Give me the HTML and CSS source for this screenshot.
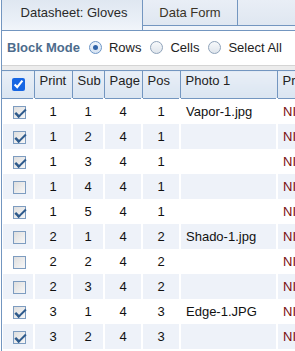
FILE: index.html
```html
<!DOCTYPE html>
<html lang="en">
<head>
    <meta charset="UTF-8">
    <meta name="viewport" content="width=device-width, initial-scale=1.0">
    <title>Datasheet: Gloves</title>
    <link rel="stylesheet" href="styles.css">
</head>
<body>
    <div class="sheet">
        <div class="tabs">
            <div class="tab active">Datasheet: Gloves</div>
            <div class="tab">Data Form</div>
            <div class="tab-fill"></div>
        </div>

        <div class="toolbar">
            <span class="label">Block Mode</span>
            <span class="radio on"></span><span class="opt">Rows</span>
            <span class="radio"></span><span class="opt">Cells</span>
            <span class="radio"></span><span class="opt">Select All</span>
        </div>

        <div class="grid-wrap">
            <table class="grid">
                <colgroup>
                    <col class="c-check">
                    <col class="c-print">
                    <col class="c-sub">
                    <col class="c-page">
                    <col class="c-pos">
                    <col class="c-photo">
                    <col class="c-next">
                </colgroup>
                <thead>
                    <tr>
                        <th class="center"><input type="checkbox" checked></th>
                        <th>Print</th>
                        <th>Sub</th>
                        <th>Page</th>
                        <th>Pos</th>
                        <th>Photo 1</th>
                        <th>Product</th>
                    </tr>
                </thead>
                <tbody>
                    <tr>
                        <td class="center"><span class="cb on"></span></td>
                        <td class="num">1</td><td class="num">1</td><td class="num">4</td><td class="num">1</td>
                        <td>Vapor-1.jpg</td><td class="brand">NIKE</td>
                    </tr>
                    <tr>
                        <td class="center"><span class="cb on"></span></td>
                        <td class="num">1</td><td class="num">2</td><td class="num">4</td><td class="num">1</td>
                        <td></td><td class="brand">NIKE</td>
                    </tr>
                    <tr>
                        <td class="center"><span class="cb on"></span></td>
                        <td class="num">1</td><td class="num">3</td><td class="num">4</td><td class="num">1</td>
                        <td></td><td class="brand">NIKE</td>
                    </tr>
                    <tr>
                        <td class="center"><span class="cb"></span></td>
                        <td class="num">1</td><td class="num">4</td><td class="num">4</td><td class="num">1</td>
                        <td></td><td class="brand">NIKE</td>
                    </tr>
                    <tr>
                        <td class="center"><span class="cb on"></span></td>
                        <td class="num">1</td><td class="num">5</td><td class="num">4</td><td class="num">1</td>
                        <td></td><td class="brand">NIKE</td>
                    </tr>
                    <tr>
                        <td class="center"><span class="cb"></span></td>
                        <td class="num">2</td><td class="num">1</td><td class="num">4</td><td class="num">2</td>
                        <td>Shado-1.jpg</td><td class="brand">NIKE</td>
                    </tr>
                    <tr>
                        <td class="center"><span class="cb"></span></td>
                        <td class="num">2</td><td class="num">2</td><td class="num">4</td><td class="num">2</td>
                        <td></td><td class="brand">NIKE</td>
                    </tr>
                    <tr>
                        <td class="center"><span class="cb"></span></td>
                        <td class="num">2</td><td class="num">3</td><td class="num">4</td><td class="num">2</td>
                        <td></td><td class="brand">NIKE</td>
                    </tr>
                    <tr>
                        <td class="center"><span class="cb on"></span></td>
                        <td class="num">3</td><td class="num">1</td><td class="num">4</td><td class="num">3</td>
                        <td>Edge-1.JPG</td><td class="brand">NIKE</td>
                    </tr>
                    <tr>
                        <td class="center"><span class="cb on"></span></td>
                        <td class="num">3</td><td class="num">2</td><td class="num">4</td><td class="num">3</td>
                        <td></td><td class="brand">NIKE</td>
                    </tr>
                    <tr>
                        <td class="center"><span class="cb on"></span></td>
                        <td class="num">3</td><td class="num">3</td><td class="num">4</td><td class="num">3</td>
                        <td></td><td class="brand">NIKE</td>
                    </tr>
                </tbody>
            </table>
        </div>
    </div>
</body>
</html>
```

FILE: styles.css
```css
:root {
    --line: #7396c0;
    --stripe: #eef2f9;
    --label: #4d6c8c;
}

* {
    margin: 0;
    padding: 0;
    box-sizing: border-box;
}

body {
    font-family: "Liberation Sans", Arial, sans-serif;
    font-size: 13px;
    color: #1a1a1a;
    background: #fff;
}

.sheet {
    height: 351px;
    margin-left: 1px;
    border-left: 1px solid var(--line);
    overflow: hidden;
}

/* tab strip */
.tabs {
    display: flex;
    height: 31px;
    background: #f1f5fa;
    border-bottom: 1px solid var(--line);
}

.tab {
    width: 95px;
    height: 26px;
    line-height: 25px;
    text-align: center;
    color: #3a3328;
    background: linear-gradient(#e9eef6, #dfe7f1);
    border-right: 1px solid var(--line);
    border-bottom: 1px solid var(--line);
}

.tab.active {
    width: 141px;
    height: 30px;
    padding-left: 4px;
    color: #2a2a2a;
    background: linear-gradient(#dfe7f1, #eaf0f7 70%, #f1f5fa);
    border-bottom: none;
}

.tab-fill {
    flex: 1;
    height: 26px;
    background: linear-gradient(#e9eef6, #dfe7f1);
    border-bottom: 1px solid var(--line);
}

/* block mode bar */
.toolbar {
    display: flex;
    align-items: center;
    height: 35px;
    padding-left: 5px;
    padding-bottom: 2px;
    border-bottom: 1px solid #d4d4d4;
    font-size: 13px;
    color: #222;
}

.label {
    font-weight: bold;
    color: var(--label);
    margin-right: 9px;
}

.radio {
    width: 13px;
    height: 13px;
    border: 1px solid #8fa3ba;
    border-radius: 50%;
    background: linear-gradient(#f7f9fb, #dfe5ec);
    margin-right: 7px;
    position: relative;
}

.radio.on {
    border-color: #6c95c6;
    background: linear-gradient(#eef4fb, #d6e3f2);
}

.radio.on::after {
    content: '';
    position: absolute;
    left: 3px;
    top: 3px;
    width: 5px;
    height: 5px;
    border-radius: 50%;
    background: #2f63a8;
}

.opt {
    margin-right: 9px;
}

/* grid */
.grid-wrap {
    border-top: 4px solid #ececec;
}

.grid {
    border-collapse: collapse;
    table-layout: fixed;
    width: 360px;
}

.c-check { width: 32px; }
.c-print { width: 38px; }
.c-sub { width: 32px; }
.c-page { width: 38px; }
.c-pos { width: 38px; }
.c-photo { width: 97px; }
.c-next { width: 85px; }

.grid th {
    height: 28px;
    padding: 2px 5px 0;
    vertical-align: top;
    text-align: left;
    font-weight: normal;
    color: #222;
    white-space: nowrap;
    overflow: hidden;
    background: linear-gradient(#e9eff7, #dae5f1);
    border: 1px solid var(--line);
}

.grid th:first-child {
    border-left: none;
}

.grid th.center {
    vertical-align: middle;
    text-align: center;
    padding: 0;
}

.grid th input {
    width: 13px;
    height: 13px;
    margin: 3px 0 0 1px;
    accent-color: #1766e3;
}

.grid td {
    height: 25px;
    padding: 0 5px;
    white-space: nowrap;
    overflow: hidden;
    border-right: 2px solid #fff;
    color: #111;
}

.grid tbody tr:nth-child(even) td {
    background: var(--stripe);
}

.grid tbody tr:nth-child(even) td:first-child {
    box-shadow: inset 1px 0 0 #fff;
}

.grid td.num,
.grid td.center {
    text-align: center;
}

.grid td.center {
    padding: 0;
}

.grid td.brand {
    color: #7a0c0c;
}

.cb {
    display: inline-block;
    vertical-align: middle;
    width: 13px;
    height: 13px;
    margin-left: 3px;
    border: 1px solid #7d9cc0;
    background: linear-gradient(135deg, #dedede, #f7f7f7);
    position: relative;
}

.cb.on::after {
    content: '';
    position: absolute;
    left: 3px;
    top: 0;
    width: 7px;
    height: 4px;
    border-left: 2px solid #2d5a8c;
    border-bottom: 2px solid #2d5a8c;
    transform: translate(-1px, 2px) rotate(-45deg) scaleX(1.25);
}
```
